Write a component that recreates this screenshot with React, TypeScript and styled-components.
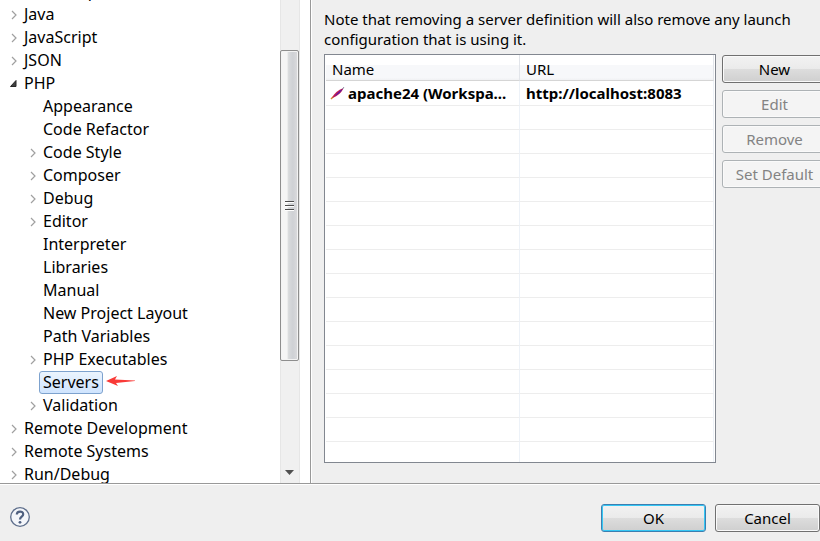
import React from "react";
import styled, { createGlobalStyle, css } from "styled-components";

const Global = createGlobalStyle`
  * { box-sizing: border-box; }
  html, body { margin: 0; padding: 0; overflow: hidden; }
  body, button, table {
    font-family: "Noto Sans", "Open Sans", sans-serif;
    font-size: 15px;
    color: #000;
  }
`;

const Dialog = styled.div`
  display: flex;
  flex-direction: column;
  height: 100vh;
  background: #efefef;
  overflow: hidden;
`;

const Body = styled.main`
  flex: 1;
  min-height: 0;
  display: flex;
`;

const Sidebar = styled.nav`
  flex: none;
  display: flex;
  width: 311px;
  padding-right: 10px;
  background: #fff;
  border-right: 1px solid #999;
`;

const TreeView = styled.div`
  flex: 1;
  min-width: 0;
  overflow: hidden;
`;

const TreeList = styled.ul`
  list-style: none;
  margin: -20px 0 0;
  padding: 0;
`;

const TreeRow = styled.li<{ $level: number }>`
  display: flex;
  align-items: center;
  height: 23px;
  padding-left: ${(p) => 9 + p.$level * 19}px;
`;

const Twisty = styled.span`
  flex: none;
  display: flex;
  width: 11px;
`;

const TreeLabel = styled.button<{ $selected?: boolean }>`
  height: 23px;
  padding: 0 3px;
  font-size: 16px;
  line-height: 21px;
  white-space: nowrap;
  border: 1px solid transparent;
  border-radius: 3px;
  background: none;
  ${(p) =>
    p.$selected &&
    css`
      border-color: #7da2ce;
      background: linear-gradient(#ebf4fe, #cfe4fe);
    `}
`;

const RedArrow = styled.svg`
  flex: none;
  margin: 0 0 4px 3px;
`;

const ScrollTrack = styled.div`
  flex: none;
  display: flex;
  flex-direction: column;
  width: 20px;
  padding: 50px 1px 0 0;
  background: #f0f0f0;
  box-shadow: inset 1px 0 0 #e6e6e6, inset -1px 0 0 #e6e6e6;
`;

const ScrollThumb = styled.div`
  flex: 0 1 311px;
  display: flex;
  align-items: center;
  justify-content: center;
  border: 1px solid #8e8e8e;
  border-radius: 2px;
  box-shadow: inset 0 0 0 1px #f3f3f3;
  background: linear-gradient(90deg, #f5f5f5 0 35%, #d8dadc 45%, #cfd1d5 70%, #dcdcde);
`;

const ScrollDown = styled.div`
  display: flex;
  justify-content: center;
  margin-top: auto;
  padding-bottom: 8px;
`;

const Content = styled.section`
  flex: 1;
  min-width: 0;
  display: flex;
  flex-direction: column;
  padding: 9px 0 20px 12px;
  margin-right: -7px;
  border-left: 1px solid #fff;
`;

const Note = styled.p`
  margin: 0;
  max-width: 490px;
  line-height: 20px;
`;

const ServerArea = styled.div`
  flex: 1;
  min-height: 0;
  display: flex;
  gap: 6px;
  margin-top: 5px;
`;

const TableFrame = styled.div`
  flex: 1;
  min-width: 0;
  overflow: hidden;
  padding: 0 1px;
  background: #fff;
  border: 1px solid #828790;
`;

const Table = styled.table`
  width: 100%;
  table-layout: fixed;
  border-collapse: separate;
  border-spacing: 0;
`;

const HeadCell = styled.th`
  height: 26px;
  padding: 3px 6px 1px;
  line-height: 20px;
  text-align: left;
  font-weight: 400;
  border-right: 1px solid #e2e5ea;
  border-bottom: 1px solid #d5d5d5;
  background: linear-gradient(#fff 0 40%, #f7f8fa 40% 90%, #f1f2f4);
`;

const Cell = styled.td<{ $icon?: boolean }>`
  height: 24px;
  padding: 0 6px 0 ${(p) => (p.$icon ? 4 : 6)}px;
  line-height: 23px;
  font-weight: 700;
  white-space: nowrap;
  border-right: 1px solid #edf2f8;
  border-bottom: 1px solid #ededed;
`;

const ServerName = styled.div`
  display: flex;
  align-items: center;
  gap: 3px;
  height: 24px;
`;

const ButtonColumn = styled.div`
  flex: none;
  display: flex;
  flex-direction: column;
  gap: 7px;
  width: 105px;
  padding-top: 1px;
`;

const PushButton = styled.button<{ $primary?: boolean }>`
  height: 28px;
  width: 105px;
  padding: 0;
  line-height: 26px;
  white-space: nowrap;
  border: 1px solid #707070;
  border-radius: 3px;
  box-shadow: inset 0 0 0 1px #fafafa;
  background: linear-gradient(#f2f2f2, #ebebeb 48%, #dddddd 50%, #cfcfcf);
  ${(p) =>
    p.$primary &&
    css`
      border-color: #3c7fb1;
      box-shadow: inset 0 0 0 1px #35c7f4;
    `}
  &:disabled {
    color: #838383;
    border-color: #adb2b5;
    background: #f4f4f4;
  }
`;

const Footer = styled.footer`
  flex: none;
  display: flex;
  align-items: center;
  gap: 9px;
  height: 58px;
  padding: 10px 0 0 9px;
  border-top: 1px solid #999;
  box-shadow: inset 0 1px 0 #fff;
`;

const HelpButton = styled.button`
  display: flex;
  padding: 0;
  margin-right: auto;
  border: 0;
  background: none;
`;

type Node = { label: string; level?: number; state?: "open" | "closed"; selected?: boolean };

const nodes: Node[] = [
  { label: "Install/Update", state: "closed" },
  { label: "Java", state: "closed" },
  { label: "JavaScript", state: "closed" },
  { label: "JSON", state: "closed" },
  { label: "PHP", state: "open" },
  { label: "Appearance", level: 1 },
  { label: "Code Refactor", level: 1 },
  { label: "Code Style", level: 1, state: "closed" },
  { label: "Composer", level: 1, state: "closed" },
  { label: "Debug", level: 1, state: "closed" },
  { label: "Editor", level: 1, state: "closed" },
  { label: "Interpreter", level: 1 },
  { label: "Libraries", level: 1 },
  { label: "Manual", level: 1 },
  { label: "New Project Layout", level: 1 },
  { label: "Path Variables", level: 1 },
  { label: "PHP Executables", level: 1, state: "closed" },
  { label: "Servers", level: 1, selected: true },
  { label: "Validation", level: 1, state: "closed" },
  { label: "Remote Development", state: "closed" },
  { label: "Remote Systems", state: "closed" },
  { label: "Run/Debug", state: "closed" },
];

const emptyRows = Array.from({ length: 15 }, (_, i) => i);

function TwistyIcon({ state }: { state?: "open" | "closed" }) {
  if (state === "open")
    return (
      <svg width="11" height="11" aria-hidden="true">
        <path d="M7 2.5V8.5H1.5Z" fill="#404040" stroke="#262626" />
      </svg>
    );
  if (state === "closed")
    return (
      <svg width="11" height="11" aria-hidden="true">
        <path d="M3 2L7 6L3 10" fill="none" stroke="#a0a0a0" strokeWidth="1.2" />
      </svg>
    );
  return null;
}

export default function App() {
  return (
    <Dialog>
      <Global />
      <Body>
        <Sidebar aria-label="Preferences">
          <TreeView>
            <TreeList>
              {nodes.map((n) => (
                <TreeRow key={n.label} $level={n.level ?? 0}>
                  <Twisty>
                    <TwistyIcon state={n.state} />
                  </Twisty>
                  <TreeLabel type="button" $selected={n.selected}>
                    {n.label}
                  </TreeLabel>
                  {n.selected && (
                    <RedArrow width="30" height="12" aria-hidden="true">
                      <path d="M0 6L11 1L9 4.6L29 5.4V6L10 8L12 11Z" fill="#f93a37" />
                    </RedArrow>
                  )}
                </TreeRow>
              ))}
            </TreeList>
          </TreeView>
          <ScrollTrack>
            <ScrollThumb>
              <svg width="9" height="11" aria-hidden="true">
                <path d="M0 1.5H9M0 5.5H9M0 9.5H9" stroke="#4c4c4c" />
                <path d="M0 2.5H9M0 6.5H9M0 10.5H9" stroke="#fff" />
              </svg>
            </ScrollThumb>
            <ScrollDown>
              <svg width="9" height="5" aria-hidden="true">
                <path d="M0 0H9L4.5 5Z" fill="#505050" />
              </svg>
            </ScrollDown>
          </ScrollTrack>
        </Sidebar>
        <Content>
          <Note>
            Note that removing a server definition will also remove any launch configuration that is
            using it.
          </Note>
          <ServerArea>
            <TableFrame>
              <Table>
                <thead>
                  <tr>
                    <HeadCell>Name</HeadCell>
                    <HeadCell>URL</HeadCell>
                  </tr>
                </thead>
                <tbody>
                  <tr>
                    <Cell $icon>
                      <ServerName>
                        <svg width="15" height="14" aria-hidden="true">
                          <path d="M1 13L4 10" stroke="#d08a28" strokeWidth="1.4" />
                          <path d="M2 12C4 7.5 8 4 13.5 2C12 6 8 10 2 12Z" fill="#c81e50" />
                          <path d="M4 10.5C6.5 7.5 9 5.5 13 2.5C11 6 8 9 4 10.5Z" fill="#5b1aa8" />
                          <path d="M12.5 3L14 1" stroke="#8a93a8" />
                        </svg>
                        apache24 (Workspa...
                      </ServerName>
                    </Cell>
                    <Cell>http://localhost:8083</Cell>
                  </tr>
                  {emptyRows.map((i) => (
                    <tr key={i}>
                      <Cell />
                      <Cell />
                    </tr>
                  ))}
                </tbody>
              </Table>
            </TableFrame>
            <ButtonColumn>
              <PushButton type="button">New</PushButton>
              <PushButton type="button" disabled>Edit</PushButton>
              <PushButton type="button" disabled>Remove</PushButton>
              <PushButton type="button" disabled>Set Default</PushButton>
            </ButtonColumn>
          </ServerArea>
        </Content>
      </Body>
      <Footer>
        <HelpButton type="button" aria-label="Help">
          <svg width="22" height="22" fill="none" aria-hidden="true">
            <circle cx="11" cy="10" r="9.3" fill="#f4f6fa" stroke="#5f6f8c" strokeWidth="1.3" />
            <path d="M7.8 7.6C7.8 3.6 14.2 3.6 14.2 7.2C14.2 9.6 11 9.6 11 12.4" stroke="#4f6080" strokeWidth="2.2" />
            <circle cx="11" cy="15.3" r="1.4" fill="#4f6080" />
          </svg>
        </HelpButton>
        <PushButton type="button" $primary>OK</PushButton>
        <PushButton type="button">Cancel</PushButton>
      </Footer>
    </Dialog>
  );
}
